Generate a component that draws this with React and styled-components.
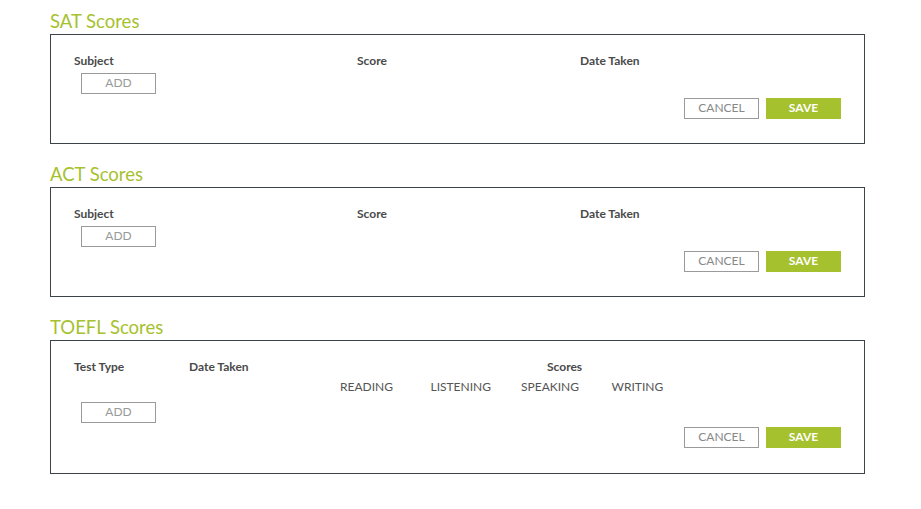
import styled, { createGlobalStyle } from 'styled-components';

const GREEN = '#a6c12e';

const GlobalStyle = createGlobalStyle`
  body {
    margin: 0;
    background: #fff;
    font-family: Lato, "Open Sans", sans-serif;
  }
`;

const sections = [
  { title: 'SAT Scores', kind: 'subject' },
  { title: 'ACT Scores', kind: 'subject' },
  { title: 'TOEFL Scores', kind: 'toefl' },
];

const toeflParts = ['READING', 'LISTENING', 'SPEAKING', 'WRITING'];

function SubjectHeader() {
  return (
    <HeaderRow>
      <Label $left={0}>Subject</Label>
      <Label $left={283}>Score</Label>
      <Label $left={506}>Date Taken</Label>
    </HeaderRow>
  );
}

function ToeflHeader() {
  return (
    <>
      <HeaderRow $toefl>
        <Label $left={0}>Test Type</Label>
        <Label $left={115}>Date Taken</Label>
        <Label $left={473}>Scores</Label>
      </HeaderRow>
      <PartsRow>
        {toeflParts.map((part) => (
          <Part key={part}>{part}</Part>
        ))}
      </PartsRow>
    </>
  );
}

function App() {
  return (
    <>
      <GlobalStyle />
      <Page>
        {sections.map(({ title, kind }) => (
          <Section key={title}>
            <Title>{title}</Title>
            <Box $toefl={kind === 'toefl'}>
              {kind === 'toefl' ? <ToeflHeader /> : <SubjectHeader />}
              <AddButton $toefl={kind === 'toefl'}>ADD</AddButton>
              <Actions>
                <CancelButton>CANCEL</CancelButton>
                <SaveButton>SAVE</SaveButton>
              </Actions>
            </Box>
          </Section>
        ))}
      </Page>
    </>
  );
}

const Page = styled.div`
  width: 815px;
  padding: 10px 0 0 50px;
`;

const Section = styled.section`
  margin-bottom: 19px;
`;

const Title = styled.h2`
  margin: 0 0 2px;
  font-size: 18.5px;
  line-height: 22px;
  font-weight: 400;
  color: ${GREEN};
`;

const Box = styled.div`
  border: 1px solid #3d4448;
  padding: ${({ $toefl }) => ($toefl ? '19px 23px 25px' : '19px 23px 24px')};
  display: flex;
  flex-direction: column;
`;

const HeaderRow = styled.div`
  position: relative;
  height: 14px;
`;

const Label = styled.span`
  position: absolute;
  top: 0;
  left: ${({ $left }) => $left}px;
  font-size: 12px;
  line-height: 14px;
  font-weight: 700;
  color: #4a4a4a;
  white-space: nowrap;
`;

const PartsRow = styled.div`
  display: grid;
  grid-template-columns: repeat(4, 90.5px);
  margin: 6px 0 0 266px;
`;

const Part = styled.span`
  font-size: 12px;
  line-height: 14px;
  color: #555;
`;

const BaseButton = styled.button`
  box-sizing: border-box;
  width: 75px;
  height: 21px;
  padding: 0 0 1px;
  font-family: Lato, "Open Sans", sans-serif;
  font-size: 12px;
  line-height: 18px;
  cursor: pointer;
`;

const AddButton = styled(BaseButton)`
  align-self: flex-start;
  margin: ${({ $toefl }) => ($toefl ? '8px 0 0 7px' : '5px 0 0 7px')};
  border: 1px solid #9a9a9a;
  background: #fff;
  color: #999;
`;

const Actions = styled.div`
  display: flex;
  justify-content: flex-end;
  gap: 7px;
  margin-top: 4px;
`;

const CancelButton = styled(BaseButton)`
  border: 1px solid #9a9a9a;
  background: #fff;
  color: #888;
`;

const SaveButton = styled(BaseButton)`
  border: 1px solid ${GREEN};
  background: ${GREEN};
  color: #fff;
  font-weight: 700;
`;

export default App;
